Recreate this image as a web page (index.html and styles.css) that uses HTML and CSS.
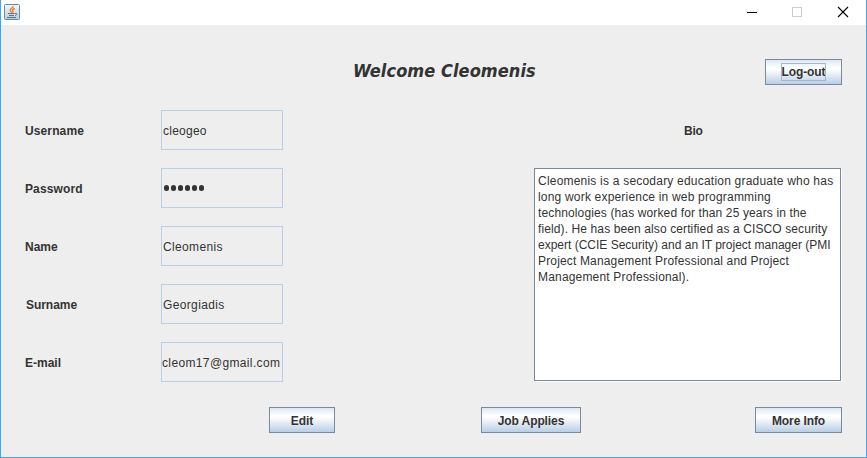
FILE: index.html
```
<!DOCTYPE html>
<html lang="en">
<head>
<meta charset="utf-8">
<title>Profile</title>
<link rel="stylesheet" href="styles.css">
</head>
<body>
<div class="window">
  <div class="titlebar">
    <svg class="java" width="16" height="16" viewBox="0 0 16 16">
      <defs><linearGradient id="g" x1="0" y1="0" x2="0" y2="1"><stop offset="0" stop-color="#f5f8fa"/><stop offset="1" stop-color="#b9cbda"/></linearGradient></defs>
      <rect x=".5" y=".5" width="15" height="15" rx="1" fill="url(#g)" stroke="#6f8797"/>
      <path d="M9 2C9.700 4 5.800 4.600 6.200 6.200C6.300 7.200 7.500 7.600 7.500 8.600M10.800 4.300C9 5.200 8 6 8.800 7C9.200 7.600 8.800 8.200 8.300 8.600" fill="none" stroke="#ee7f22" stroke-width="1.400"/>
      <path d="M4 9.500H10.500M5 11.500H10M11 9.500C13.500 8.700 13.500 11 11 11.500M3 13.500H12" fill="none" stroke="#54758f"/>
    </svg>
    <svg class="controls" width="103" height="12" viewBox="0 0 103 12" shape-rendering="crispEdges">
      <path d="M0 6.500H10" stroke="#000"/>
      <rect x="45.500" y="1.500" width="9" height="9" fill="none" stroke="#ccc"/>
      <path d="M91 1L101 11M101 1L91 11" stroke="#000" stroke-width="1.100" shape-rendering="auto"/>
    </svg>
  </div>
  <main class="content">
    <header class="head">
      <h1 class="title">Welcome Cleomenis</h1>
      <button class="btn logout"><span class="focus">Log-out</span></button>
    </header>
    <div class="profile">
      <div class="form">
        <div class="row"><label class="label">Username</label><div class="field">cleogeo</div></div>
        <div class="row"><label class="label">Password</label><div class="field"><span class="dots"><i></i><i></i><i></i><i></i><i></i><i></i></span></div></div>
        <div class="row"><label class="label name">Name</label><div class="field wide">Cleomenis</div></div>
        <div class="row"><label class="label surname">Surname</label><div class="field wide">Georgiadis</div></div>
        <div class="row"><label class="label name">E-mail</label><div class="field wide email">cleom17@gmail.com</div></div>
      </div>
      <section class="bio">
        <h2 class="bio-title">Bio</h2>
        <div class="bio-text">
          <p class="l1">Cleomenis is a secodary education graduate who has</p>
          <p class="l2">long work experience in web programming</p>
          <p class="l3">technologies (has worked for than 25 years in the</p>
          <p class="l4">field). He has been also certified as a CISCO security</p>
          <p class="l5">expert (CCIE Security) and an IT project manager (PMI</p>
          <p class="l6">Project Management Professional and Project</p>
          <p class="l7">Management Professional).</p>
        </div>
      </section>
    </div>
    <footer class="actions">
      <button class="btn edit">Edit</button>
      <button class="btn jobs">Job Applies</button>
      <button class="btn more">More Info</button>
    </footer>
  </main>
</div>
</body>
</html>
```
FILE: styles.css
```
* { box-sizing: border-box; }
body { margin: 0; font: 12px/16px "Liberation Sans", Arial, sans-serif; color: #333; }
h1, h2, p { margin: 0; }
.window { width: 867px; height: 458px; border: 1px solid #41a5ee; border-top: 0; background: #eee; overflow: hidden; }
.titlebar { height: 25px; background: #fff; display: flex; justify-content: space-between; padding: 4px 16px 0 3px; }
.java { display: block; }
.controls { display: block; margin-top: 2px; }
.content { padding: 34px 24px 0; }
.head { display: flex; height: 51px; align-items: flex-start; }
.title { width: 190px; margin-left: 328px; font: italic bold 18px/24px "DejaVu Sans Condensed", "DejaVu Sans", sans-serif; font-stretch: condensed; letter-spacing: .07px; white-space: nowrap; }
.btn { height: 26px; padding: 1px 0 0; border: 1px solid #7a8a99; border-radius: 0; background: linear-gradient(#dde8f3, #fff 32%, #fff 38%, #b8cfe5); color: #333; font: bold 12px/16px "Liberation Sans", Arial, sans-serif; white-space: nowrap; }
.logout { width: 77px; margin-left: auto; padding-top: 0; letter-spacing: -.1px; }
.focus { display: inline-block; height: 18px; line-height: 19px; outline: 1px solid #a3b8cc; outline-offset: -1px; padding: 0 1px; }
.profile { display: flex; justify-content: space-between; }
.form { display: grid; gap: 18px; }
.row { display: flex; align-items: center; }
.label { width: 136px; font-weight: bold; padding-top: 2px; letter-spacing: .12px; }
.name { letter-spacing: 0; }
.surname { padding-left: 1px; letter-spacing: -.05px; }
.field { width: 122px; height: 40px; border: 1px solid #b8cfe5; padding: 2px 1px 0; display: flex; align-items: center; letter-spacing: .25px; white-space: nowrap; }
.wide { letter-spacing: .36px; }
.email { padding-left: 0; }
.dots { display: flex; gap: 1.5px; margin-left: .5px; margin-top: -2px; }
.dots i { width: 5.5px; height: 5.5px; border-radius: 50%; background: #333; }
.bio { width: 308px; display: flex; flex-direction: column; }
.bio-title { height: 58px; padding: 13px 0 0 150px; font-size: 12px; line-height: 16px; letter-spacing: -.2px; }
.bio-text { width: 307px; height: 213px; margin-bottom: 1px; border: 1px solid #7a8a99; background: #fff; padding: 4px 3px; box-shadow: 1px 1px #fff; white-space: nowrap; }
.l1 { letter-spacing: .21px; }
.l2 { letter-spacing: .19px; }
.l3 { letter-spacing: .13px; }
.l4 { letter-spacing: .11px; }
.l6 { letter-spacing: .16px; }
.l7 { letter-spacing: .18px; }
.actions { display: flex; padding-left: 244px; padding-top: 25px; }
.edit { width: 66px; letter-spacing: -.1px; }
.jobs { width: 100px; margin-left: 146px; letter-spacing: -.1px; }
.more { width: 87px; margin-left: auto; letter-spacing: -.1px; }
```
